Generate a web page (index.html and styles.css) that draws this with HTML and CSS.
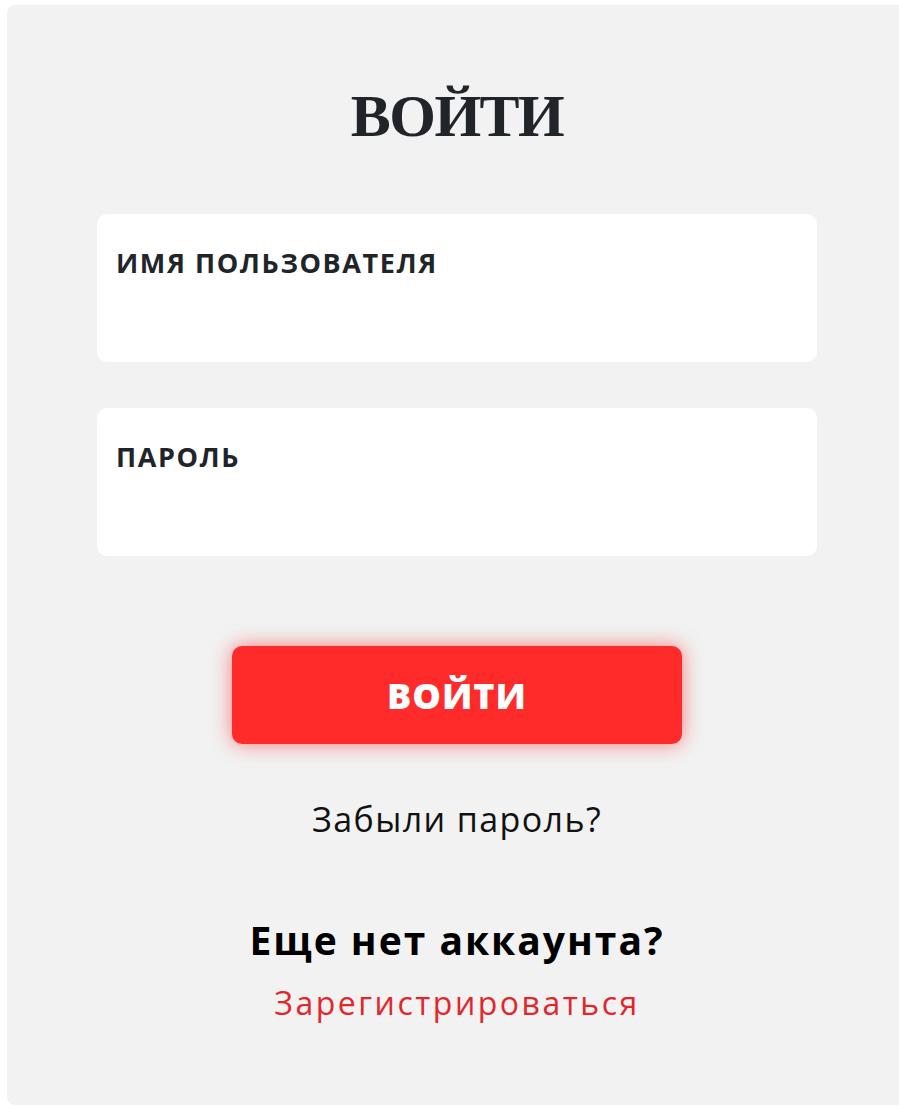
FILE: index.html
```html
<!DOCTYPE html>
<html lang="ru">
<head>
  <meta charset="UTF-8">
  <meta name="viewport" content="width=device-width, initial-scale=1.0">
  <title>Войти</title>
  <link rel="stylesheet" href="styles.css">
</head>

<body>
  <div class="login-card">
    <h1 class="login-title">ВОЙТИ</h1>

    <form class="login-form">
      <label class="field">
        <span class="field-label">ИМЯ ПОЛЬЗОВАТЕЛЯ</span>
        <input type="text" class="field-input" name="username">
      </label>
      <label class="field">
        <span class="field-label">ПАРОЛЬ</span>
        <input type="password" class="field-input" name="password">
      </label>

      <button type="submit" class="login-btn">ВОЙТИ</button>
    </form>

    <a href="#" class="forgot-link">Забыли пароль?</a>

    <div class="register">
      <h2 class="register-title">Еще нет аккаунта?</h2>
      <a href="#" class="register-link">Зарегистрироваться</a>
    </div>
  </div>
</body>
</html>
```

FILE: styles.css
```css
* {
  box-sizing: border-box;
}

body {
  margin: 0;
  padding: 5px 0 0 7px;
  overflow: hidden;
  background: #ffffff;
  font-family: "Open Sans", Arial, sans-serif;
}

.login-card {
  width: 900px;
  background: #f2f2f2;
  border-radius: 8px;
  padding: 81px 0 83px;
  display: flex;
  flex-direction: column;
  align-items: center;
}

.login-title {
  margin: 0;
  font-family: "Liberation Serif", "Times New Roman", serif;
  font-weight: bold;
  font-size: 60px;
  line-height: 60px;
  letter-spacing: -1.5px;
  color: #212529;
}

.login-form {
  margin-top: 68px;
  display: flex;
  flex-direction: column;
  align-items: center;
}

.field {
  width: 720px;
  height: 148px;
  background: #ffffff;
  border-radius: 10px;
  padding: 33px 19px 0;
  display: flex;
  flex-direction: column;
}

.field + .field {
  margin-top: 46px;
}

.field-label {
  font-weight: 700;
  font-size: 27px;
  line-height: 1.2;
  letter-spacing: 1.6px;
  color: #212529;
}

.field-input {
  margin-top: 8px;
  border: none;
  outline: none;
  background: transparent;
  font-family: inherit;
  font-size: 22px;
  padding: 4px 0;
}

.login-btn {
  margin-top: 90px;
  width: 450px;
  height: 98px;
  border: none;
  border-radius: 10px;
  background: #ff2a2a;
  color: #ffffff;
  font-family: inherit;
  font-weight: 800;
  font-size: 36px;
  letter-spacing: 1px;
  cursor: pointer;
  box-shadow: 0 0 20px rgba(255, 42, 42, 0.6);
}

.forgot-link {
  margin-top: 55px;
  font-size: 34px;
  line-height: 1.2;
  letter-spacing: 1.4px;
  color: #111111;
  text-decoration: none;
}

.register {
  margin-top: 77px;
  display: flex;
  flex-direction: column;
  align-items: center;
}

.register-title {
  margin: 0;
  font-weight: 700;
  font-size: 39px;
  line-height: 1.2;
  letter-spacing: 2px;
  color: #000000;
}

.register-link {
  margin-top: 20px;
  font-size: 32px;
  line-height: 1.2;
  letter-spacing: 2.5px;
  color: #e3262b;
  text-decoration: none;
}
```
